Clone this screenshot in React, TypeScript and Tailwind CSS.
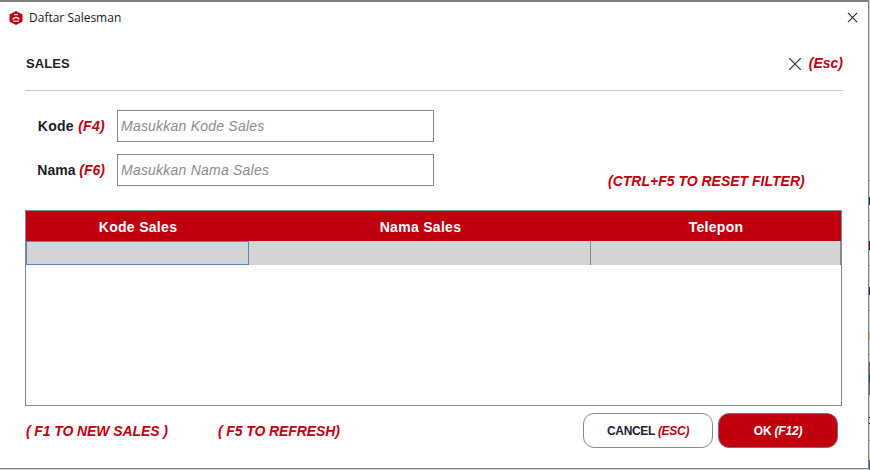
const edgeMarks = [
  { top: 180, height: 1, color: "#8a8a8a" },
  { top: 197, height: 8, color: "#2a3f7a" },
  { top: 220, height: 1, color: "#8a8a8a" },
  { top: 241, height: 9, color: "#5a1a24" },
  { top: 265, height: 1, color: "#8a8a8a" },
  { top: 287, height: 8, color: "#2a2a4a" },
  { top: 310, height: 1, color: "#8a8a8a" },
  { top: 332, height: 8, color: "#f0a050" },
  { top: 354, height: 1, color: "#8a8a8a" },
  { top: 362, height: 12, color: "#6a6a6a" },
  { top: 374, height: 8, color: "#2a3a80" },
  { top: 382, height: 13, color: "#6a6a6a" },
  { top: 417, height: 1, color: "#222222" },
  { top: 423, height: 1, color: "#222222" },
  { top: 440, height: 1, color: "#8a8a8a" },
  { top: 460, height: 10, color: "#4a66b0" },
];

function Logo() {
  return (
    <svg width="14" height="14" viewBox="0 0 14 14" className="shrink-0">
      <path d="M7 0 L13.5 3.4 V10.6 L7 14 L0.5 10.6 V3.4 Z" fill="#c00010" />
      <path d="M3.2 8.4 C3.8 4.8 10.2 4.8 10.8 8.4 L9.2 8.4 C8.6 6.9 5.4 6.9 4.8 8.4 Z" fill="#fff" />
      <path d="M5 3 H9 V4.2 H5 Z" fill="#fff" />
      <path d="M4.2 9.6 H9.8 V10.8 H4.2 Z" fill="#fff" />
    </svg>
  );
}

function CloseX({ size, className }: { size: number; className: string }) {
  return (
    <svg width={size} height={size} viewBox="0 0 12 12" className={className}>
      <path d="M1 1 L11 11 M11 1 L1 11" stroke="currentColor" strokeWidth="1.1" fill="none" />
    </svg>
  );
}

function Field({ label, hotkey, placeholder, labelClass }: { label: string; hotkey: string; placeholder: string; labelClass: string }) {
  return (
    <div className="flex items-center h-8">
      <div className={"w-[92px] pr-[12px] text-right text-[14px] font-bold text-[#1c1c28] whitespace-nowrap " + labelClass}>
        {label} <span className="italic text-[#c0000f]">{hotkey}</span>
      </div>
      <div className="w-[317px] h-8 border border-[#808a96] flex items-center pl-[3px] text-[14px] italic tracking-[0.22px] text-[#8c8c8c]">
        {placeholder}
      </div>
    </div>
  );
}

export default function App() {
  return (
    <div className="relative w-[870px] h-[470px] bg-[#d4d4d4] font-['Liberation_Sans',Arial,sans-serif] overflow-hidden">
      <div className="w-[869px] h-[469px] bg-white border-t-2 border-r border-b border-t-[#808080] border-r-[#808080] border-b-[#808080] flex flex-col">
        <div className="h-[29px] pt-[2px] pl-[9px] pr-[10px] flex items-center gap-[6px] text-[12px] text-[#1a1a1a] font-['Open_Sans',sans-serif]">
          <Logo />
          <span>Daftar Salesman</span>
          <CloseX size={11} className="ml-auto text-[#222]" />
        </div>

        <div className="ml-[25px] h-[60px] pt-[6px] border-b border-[#c8c8c8] flex items-center justify-between w-[818px]">
          <span className="pl-[1px] text-[13px] font-bold text-[#222] tracking-[0.1px]">SALES</span>
          <div className="flex items-center gap-[7px]">
            <CloseX size={14} className="text-[#333]" />
            <span className="text-[14px] font-bold italic text-[#c0000f]">(Esc)</span>
          </div>
        </div>

        <div className="relative pl-[25px] pt-[19px] flex flex-col gap-[12px]">
          <Field label="Kode" hotkey="(F4)" placeholder="Masukkan Kode Sales" labelClass="tracking-[0.3px]" />
          <Field label="Nama" hotkey="(F6)" placeholder="Masukkan Nama Sales" labelClass="tracking-normal" />
          <div className="absolute left-[608px] top-[80px] text-[14px] font-bold italic text-[#c0000f] whitespace-nowrap">
            (CTRL+F5 TO RESET FILTER)
          </div>
        </div>

        <div className="ml-[25px] mt-[24px] w-[817px] h-[196px] border border-[#808a96] flex flex-col">
          <div className="h-[30px] pt-[2px] bg-[#c0000f] flex text-white text-[14px] font-bold tracking-[0.3px]">
            <div className="w-[224px] flex items-center justify-center">Kode Sales</div>
            <div className="w-[341px] flex items-center justify-center">Nama Sales</div>
            <div className="flex-1 flex items-center justify-center">Telepon</div>
          </div>
          <div className="h-6 bg-[#d4d4d4] flex">
            <div className="w-[223px] border border-[#5f7fbf]"></div>
            <div className="w-[342px] border-r border-[#808a96]"></div>
            <div className="flex-1 border-r border-[#808a96]"></div>
          </div>
        </div>

        <div className="ml-[25px] mt-[7px] flex items-start">
          <span className="w-[193px] pl-[1px] mt-[8px] text-[14px] font-bold italic text-[#c0000f] tracking-[-0.1px] whitespace-nowrap">( F1 TO NEW SALES )</span>
          <span className="mt-[8px] text-[14px] font-bold italic text-[#c0000f] tracking-[-0.1px] whitespace-nowrap">( F5 TO REFRESH)</span>
          <div className="ml-auto mr-[30px] flex gap-[5px]">
            <button className="w-[130px] h-[35px] rounded-[11px] bg-white border border-[#8a8a8a] text-[12px] tracking-[-0.3px] font-bold text-[#1c2333]">
              CANCEL <span className="italic text-[#c0000f]">(ESC)</span>
            </button>
            <button className="w-[120px] h-[35px] rounded-[11px] bg-[#c0000f] border border-[#8a6a6a] text-[12px] tracking-[-0.2px] font-bold text-white">
              OK <span className="italic">(F12)</span>
            </button>
          </div>
        </div>
      </div>
      {edgeMarks.map((m) => (
        <div
          key={m.top}
          className="absolute right-0 w-px"
          style={{ top: m.top, height: m.height, backgroundColor: m.color }}
        ></div>
      ))}
    </div>
  );
}
